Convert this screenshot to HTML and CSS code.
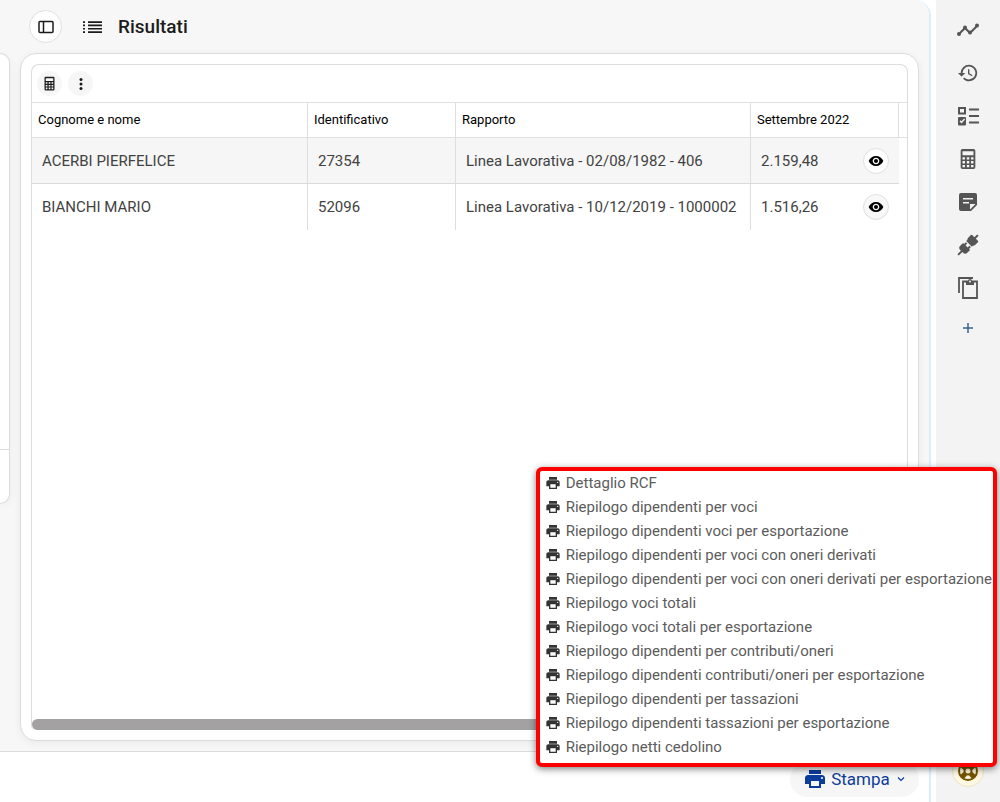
FILE: index.html
```
<!DOCTYPE html>
<html lang="it">
<head>
<meta charset="utf-8">
<title>Risultati</title>
<link rel="stylesheet" href="styles.css">
</head>
<body>
<svg class="defs" width="0" height="0" aria-hidden="true">
  <symbol id="print" viewBox="0 0 24 24"><path d="M19 8H5c-1.660 0-3 1.340-3 3v6h4v4h12v-4h4v-6c0-1.660-1.340-3-3-3zm-3 11H8v-5h8v5zm3-7c-.55 0-1-.45-1-1s.45-1 1-1 1 .45 1 1-.45 1-1 1zm-1-9H6v4h12V3z"/></symbol>
  <symbol id="eye" viewBox="0 0 24 24"><path d="M12 4.500C7 4.500 2.730 7.610 1 12c1.730 4.390 6 7.500 11 7.500s9.270-3.110 11-7.500c-1.730-4.390-6-7.500-11-7.500zM12 17c-2.760 0-5-2.240-5-5s2.240-5 5-5 5 2.240 5 5-2.240 5-5 5zm0-8c-1.660 0-3 1.340-3 3s1.340 3 3 3 3-1.340 3-3-1.340-3-3-3z"/></symbol>
  <symbol id="calc" viewBox="0 0 24 24"><path fill-rule="evenodd" d="M6 1h12a2 2 0 0 1 2 2v18a2 2 0 0 1-2 2H6a2 2 0 0 1-2-2V3a2 2 0 0 1 2-2zM6 3.500v4.500h12V3.500zM6 10v2.500h2.700V10zm4.700 0v2.500h2.700V10zm4.600 0v2.500H18V10zM6 14.300v2.500h2.700v-2.500zm4.700 0v2.500h2.700v-2.500zm4.600 0v2.500H18v-2.500zM6 18.500V21h2.700v-2.500zm4.700 0V21h2.700v-2.500zm4.600 0V21H18v-2.500z"/></symbol>
</svg>
<div class="app">
  <main class="main">
    <div class="workspace">
      <aside class="side"><div class="side-body"></div><div class="side-foot"></div></aside>
      <section class="results">
        <header class="head">
          <button class="round toggle" aria-label="Pannello"><svg width="16" height="14" viewBox="0 0 16 14" fill="none" stroke="currentColor" stroke-width="1.500"><rect x="1" y="1.500" width="14" height="11" rx="1"/><path d="M5.500 1.500v11"/></svg></button>
          <svg class="list" width="20" height="14" viewBox="0 0 20 14"><path d="M0 1.300h2v1.700H0zM5 1.300h14v1.700H5zM0 4.600h2v1.700H0zM5 4.600h14v1.700H5zM0 7.900h2v1.700H0zM5 7.900h14v1.700H5zM0 11.200h2v1.700H0zM5 11.200h14v1.700H5z"/></svg>
          <h1 class="title">Risultati</h1>
        </header>
        <div class="card">
          <div class="sheet">
            <div class="toolbar">
              <button class="tool" aria-label="Calcola"><svg width="15" height="15"><use href="#calc"/></svg></button>
              <button class="tool" aria-label="Altre azioni"><svg width="12" height="14" viewBox="0 0 12 14"><circle cx="6" cy="2.500" r="1.500"/><circle cx="6" cy="7" r="1.500"/><circle cx="6" cy="11.500" r="1.500"/></svg></button>
            </div>
            <table class="grid">
              <colgroup><col class="c-name"><col class="c-id"><col class="c-rel"><col class="c-id"><col></colgroup>
              <thead><tr><th>Cognome e nome</th><th>Identificativo</th><th>Rapporto</th><th>Settembre 2022</th><th></th></tr></thead>
              <tbody>
                <tr class="active"><td>ACERBI PIERFELICE</td><td>27354</td><td>Linea Lavorativa - 02/08/1982 - 406</td><td><div class="amount">2.159,48<button class="round view" aria-label="Vedi ACERBI PIERFELICE"><svg width="16" height="16"><use href="#eye"/></svg></button></div></td><td></td></tr>
                <tr><td>BIANCHI MARIO</td><td>52096</td><td>Linea Lavorativa - 10/12/2019 - 1000002</td><td><div class="amount">1.516,26<button class="round view" aria-label="Vedi BIANCHI MARIO"><svg width="16" height="16"><use href="#eye"/></svg></button></div></td><td></td></tr>
              </tbody>
            </table>
            <div class="thumb"></div>
          </div>
        </div>
      </section>
    </div>
    <footer class="foot">
      <button class="stampa"><svg width="24" height="24"><use href="#print"/></svg>Stampa<svg class="chev" width="10" height="10" viewBox="0 0 10 10" fill="none"><path d="M2 3.500l3 3 3-3" stroke="currentColor" stroke-width="1.200"/></svg></button>
    </footer>
  </main>
  <nav class="rail" aria-label="Strumenti">
    <button aria-label="Andamento"><svg width="24" height="24" viewBox="0 0 24 24"><path d="M3 16l6-6 5 5 7-7" fill="none" stroke="currentColor" stroke-width="2"/><circle cx="3" cy="16" r="2"/><circle cx="9" cy="9.500" r="2"/><circle cx="14" cy="14.500" r="2"/><circle cx="21" cy="7.500" r="2"/></svg></button>
    <button aria-label="Cronologia"><svg width="22" height="22" viewBox="0 0 24 24"><path d="M13 3a9 9 0 0 0-9 9H1l3.890 3.890.07.14L9 12H6a7 7 0 1 1 2.060 4.940l-1.420 1.420A9 9 0 1 0 13 3zm-1 5v5l4.280 2.540.72-1.210-3.500-2.080V8z"/></svg></button>
    <button aria-label="Lista di controllo"><svg width="22" height="22" viewBox="0 0 22 22"><path fill="none" stroke="currentColor" stroke-width="2" d="M2 3h6v5.500H2zM12 4.500h10M12 11h10M12 17.500h10"/><path fill-rule="evenodd" d="M2 12h6a1 1 0 0 1 1 1v6.500a1 1 0 0 1-1 1H2a1 1 0 0 1-1-1V13a1 1 0 0 1 1-1zm.5 4.300l2 2.200 3.600-4-1-1-2.600 2.800-1-1z"/></svg></button>
    <button aria-label="Calcolatrice"><svg width="22" height="22"><use href="#calc"/></svg></button>
    <button aria-label="Note"><svg width="24" height="24" viewBox="0 0 24 24"><path fill-rule="evenodd" d="M5 3h14a2 2 0 0 1 2 2v10l-6 6H5a2 2 0 0 1-2-2V5a2 2 0 0 1 2-2zm2 5v1.600h10V8zm0 4v1.600h6V12zm7 7.500l5.500-5.500H14z"/></svg></button>
    <button aria-label="Connessioni"><svg width="24" height="24" viewBox="0 0 24 24"><g transform="rotate(45 12 12)"><path d="M11 -2h2v4h3a1 1 0 0 1 1 1v4a4 4 0 0 1-1 2v1.500H8V9a4 4 0 0 1-1-2V3a1 1 0 0 1 1-1h3zM7 14h1.500v-2.500h2V14h3v-2.500h2V14H17v4a3 3 0 0 1-3 3h-1v5h-2v-5h-1a3 3 0 0 1-3-3z"/></g></svg></button>
    <button aria-label="Appunti"><svg width="22" height="24" viewBox="0 0 22 24" fill="none" stroke="currentColor" stroke-width="1.800"><path d="M2 17V2h14M6 5.500h14V22H6z"/><path d="M9 5h2a2 2 0 0 1 4 0h2v4H9z" fill="currentColor" stroke="none"/><circle cx="13" cy="5.500" r="1" fill="#f3f3f3" stroke="none"/></svg></button>
    <button class="add" aria-label="Aggiungi"><svg width="10" height="10" viewBox="0 0 10 10"><path d="M5 0v10M0 5h10" stroke="currentColor" stroke-width="1.500"/></svg></button>
    <button class="help" aria-label="Aiuto"><svg width="22" height="22" viewBox="0 0 22 22" fill="none" stroke="currentColor"><circle cx="11" cy="11" r="9" stroke-width="2"/><circle cx="11" cy="11" r="3.500" stroke-width="2"/><path d="M4.600 4.600l3.600 3.600M13.800 13.800l3.600 3.600M17.400 4.600l-3.600 3.600M8.200 13.800l-3.600 3.600" stroke-width="5"/></svg></button>
  </nav>
  <div class="menu" role="menu">
    <button role="menuitem"><svg width="16" height="16"><use href="#print"/></svg>Dettaglio RCF</button>
    <button role="menuitem"><svg width="16" height="16"><use href="#print"/></svg>Riepilogo dipendenti per voci</button>
    <button role="menuitem"><svg width="16" height="16"><use href="#print"/></svg>Riepilogo dipendenti voci per esportazione</button>
    <button role="menuitem"><svg width="16" height="16"><use href="#print"/></svg>Riepilogo dipendenti per voci con oneri derivati</button>
    <button role="menuitem"><svg width="16" height="16"><use href="#print"/></svg>Riepilogo dipendenti per voci con oneri derivati per esportazione</button>
    <button role="menuitem"><svg width="16" height="16"><use href="#print"/></svg>Riepilogo voci totali</button>
    <button role="menuitem"><svg width="16" height="16"><use href="#print"/></svg>Riepilogo voci totali per esportazione</button>
    <button role="menuitem"><svg width="16" height="16"><use href="#print"/></svg>Riepilogo dipendenti per contributi/oneri</button>
    <button role="menuitem"><svg width="16" height="16"><use href="#print"/></svg>Riepilogo dipendenti contributi/oneri per esportazione</button>
    <button role="menuitem"><svg width="16" height="16"><use href="#print"/></svg>Riepilogo dipendenti per tassazioni</button>
    <button role="menuitem"><svg width="16" height="16"><use href="#print"/></svg>Riepilogo dipendenti tassazioni per esportazione</button>
    <button role="menuitem"><svg width="16" height="16"><use href="#print"/></svg>Riepilogo netti cedolino</button>
  </div>
</div>
</body>
</html>
```
FILE: styles.css
```
* { box-sizing: border-box; }
body { margin: 0; font-family: Roboto, "Liberation Sans", sans-serif; color: #1c1c1c; background: #fff; }
button { border: 0; padding: 0; margin: 0; background: none; color: inherit; font: inherit; display: flex; align-items: center; justify-content: center; }
svg { fill: currentColor; flex: none; }
svg[fill="none"] { fill: none; }
.defs { position: absolute; }
.app { position: relative; display: flex; gap: 5px; height: 100vh; overflow: hidden; }
.main { flex: 1; min-width: 0; display: flex; flex-direction: column; border-right: 2px solid #dceefd; border-top-right-radius: 16px; overflow: hidden; }
.workspace { flex: 1; min-height: 0; display: flex; gap: 10px; padding-right: 10px; background: #f7f7f7; }
.side { width: 10px; height: 451px; margin-top: 53px; display: flex; flex-direction: column; background: #fff; border: 1px solid #dcdcde; border-left: 0; border-radius: 0 16px 16px 0; box-shadow: 0 2px 8px #0000000d; overflow: hidden; }
.side-body { flex: 1; border-bottom: 1px solid #dcdcde; }
.side-foot { height: 53px; }
.results { flex: 1; min-width: 0; display: flex; flex-direction: column; padding-bottom: 10px; }
.head { height: 53px; display: flex; align-items: center; padding-left: 9px; }
.round { border: 1px solid #e0e0e2; border-radius: 50%; background: #fff; }
.toggle { width: 33px; height: 33px; }
.list { margin: 0 15px 0 21px; }
.title { margin: 0; font-size: 19px; line-height: 24px; font-weight: 500; }
.card { flex: 1; min-height: 0; display: flex; padding: 10px; background: #fff; border: 1px solid #dcdcdf; border-radius: 16px; box-shadow: 0 2px 8px #0000000f; }
.sheet { flex: 1; min-width: 0; display: flex; flex-direction: column; border: 1px solid #dcdce0; border-bottom: 0; border-radius: 8px 8px 5px 5px; overflow: hidden; }
.toolbar { height: 37px; display: flex; align-items: center; gap: 6px; padding-left: 5px; }
.tool { width: 25px; height: 25px; border-radius: 50%; background: #f6f6f6; }
.grid { width: 100%; table-layout: fixed; border-collapse: separate; border-spacing: 0; }
.c-name { width: 276px; }
.c-id { width: 148px; }
.c-rel { width: 295px; }
.grid th { height: 36px; padding: 0 6px 2px; border-top: 1px solid #e0e0e2; border-bottom: 1px solid #e0e0e2; border-right: 1px solid #dedee0; text-align: left; font-size: 13px; font-weight: 400; color: #000; white-space: nowrap; }
.grid td { height: 46px; padding: 0 10px; border-right: 1px solid #dedee0; font-size: 15px; color: #424242; white-space: nowrap; }
.grid th:last-child, .grid td:nth-child(n+4) { border-right: 0; }
.active td:not(:last-child) { background: #f6f6f6; border-bottom: 1px solid #dadadc; }
.amount { display: flex; align-items: center; justify-content: space-between; }
.view { width: 26px; height: 26px; color: #000; background: #f8f8f8; }
.active .view { background: #fff; }
.thumb { height: 11px; margin-top: auto; border-radius: 6px; background: #a3a1a1; }
.foot { height: 51px; display: flex; align-items: center; justify-content: flex-end; padding: 4px 10px 0 0; border-top: 1px solid #dcdcde; }
.stampa { width: 129px; height: 35px; gap: 4px; border-radius: 18px; background: #f6f6f6; color: #0c3c9c; font-size: 17px; }
.chev { margin-left: 2px; }
.rail { width: 64px; display: flex; flex-direction: column; align-items: center; padding: 8px 0 15px; background: #f3f3f3; color: #555; }
.rail button { width: 43px; height: 43px; }
.rail .add { height: 38px; color: #36648f; }
.rail .help { width: 32px; height: 32px; margin-top: auto; border-radius: 50%; border: 1px solid #ece4cc; background: #fff8e0; color: #735300; }
.menu { position: absolute; right: 3px; bottom: 35px; padding: 0 1px 4px 5px; border: 4px solid #f00; border-radius: 6px; background: #fff; box-shadow: 0 2px 7px #00000080; }
.menu button { height: 24px; gap: 5px; font-size: 15px; white-space: nowrap; color: #5c5c5c; }
.menu svg { color: #333; }
```
